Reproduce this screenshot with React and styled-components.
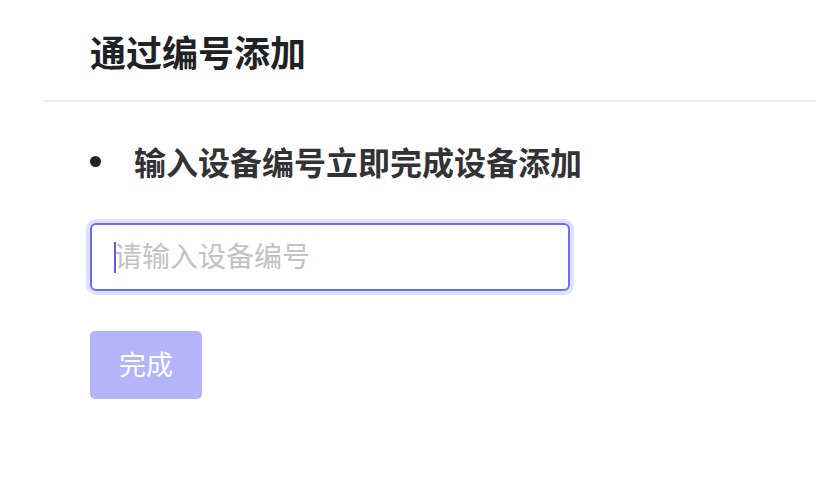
import React from "react";
import styled, { createGlobalStyle } from "styled-components";

const GlobalStyle = createGlobalStyle`
  html, body {
    margin: 0;
    padding: 0;
    background: #ffffff;
  }
  body {
    font-family: "Noto Sans CJK SC", "Noto Sans", sans-serif;
    color: #222222;
  }
`;

const Page = styled.div`
  width: 816px;
  height: 480px;
  padding-left: 42px;
  box-sizing: border-box;
  overflow: hidden;
`;

const Header = styled.div`
  height: 102px;
  box-sizing: border-box;
  padding-left: 48px;
  display: flex;
  align-items: center;
  border-bottom: 2px solid #eeeef2;
`;

const Title = styled.h1`
  margin: 0;
  font-size: 36px;
  font-weight: 700;
  color: #222226;
  position: relative;
  top: 1px;
`;

const Body = styled.div`
  padding: 37px 0 0 48px;
  display: flex;
  flex-direction: column;
  align-items: flex-start;
`;

const Tip = styled.div`
  display: flex;
  align-items: center;
  gap: 33px;
  font-size: 32px;
  font-weight: 700;
  color: #333336;
  height: 44px;
`;

const Dot = styled.span`
  width: 11px;
  height: 11px;
  border-radius: 50%;
  background: #222226;
  flex-shrink: 0;
`;

const InputWrap = styled.div`
  margin-top: 40px;
  width: 480px;
  height: 68px;
  box-sizing: border-box;
  border: 2px solid #6a6ef2;
  border-radius: 6px;
  box-shadow: 0 0 0 4px #dfe0fb;
  display: flex;
  align-items: center;
  padding: 0 0 4px 22px;
  position: relative;
`;

const Caret = styled.span`
  position: absolute;
  left: 22px;
  top: 17px;
  width: 2px;
  height: 31px;
  background: #5a5ef0;
`;

const Input = styled.input`
  border: none;
  outline: none;
  background: transparent;
  width: 100%;
  font-family: "Noto Sans CJK SC", "Noto Sans", sans-serif;
  font-size: 28px;
  color: #333;
  padding: 0;
  caret-color: transparent;

  &::placeholder {
    color: #c2c2c4;
  }
`;

const DoneButton = styled.button`
  margin-top: 40px;
  width: 112px;
  height: 68px;
  border: none;
  border-radius: 5px;
  background: #b3b5f8;
  color: #ffffff;
  font-family: "Noto Sans CJK SC", "Noto Sans", sans-serif;
  font-size: 27px;
  padding: 0 0 4px;
  cursor: not-allowed;
`;

export default function App() {
  return (
    <>
      <GlobalStyle />
      <Page>
        <Header>
          <Title>通过编号添加</Title>
        </Header>
        <Body>
          <Tip>
            <Dot />
            输入设备编号立即完成设备添加
          </Tip>
          <InputWrap>
            <Caret />
            <Input placeholder="请输入设备编号" />
          </InputWrap>
          <DoneButton disabled>完成</DoneButton>
        </Body>
      </Page>
    </>
  );
}
